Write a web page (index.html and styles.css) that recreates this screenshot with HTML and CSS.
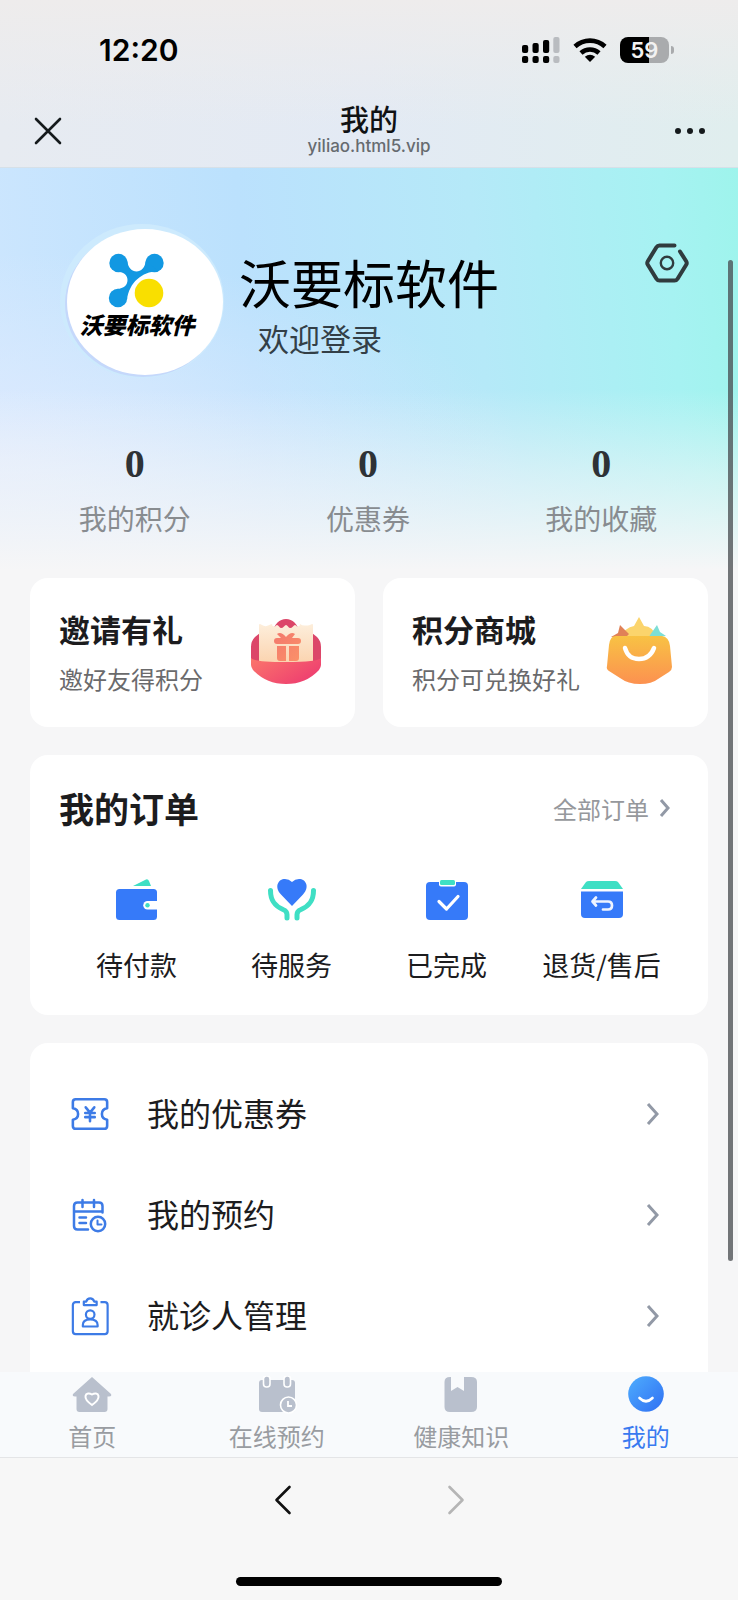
FILE: index.html
```html
<!DOCTYPE html>
<html lang="zh-CN">
<head>
<meta charset="utf-8">
<meta name="viewport" content="width=device-width, initial-scale=1">
<title>我的</title>
<link rel="stylesheet" href="styles.css">
</head>
<body>
<div class="app">
  <header class="topbar">
    <div class="status">
      <time class="clock">12:20</time>
      <div class="status-icons">
        <svg class="signal" width="38" height="26" viewBox="0 0 38 26" aria-hidden="true">
          <g fill="#000"><rect x="0" y="8" width="6.200" height="8" rx="2"/><rect x="10.500" y="6" width="6.200" height="10" rx="2"/><rect x="21" y="3" width="6.200" height="13" rx="2"/><rect x="0" y="19" width="6.200" height="7" rx="2"/><rect x="10.500" y="19" width="6.200" height="7" rx="2"/><rect x="21" y="19" width="6.200" height="7" rx="2"/></g>
          <g fill="#b9bcc0"><rect x="31.300" y="0" width="6.200" height="16" rx="2"/><rect x="31.300" y="19" width="6.200" height="7" rx="2"/></g>
        </svg>
        <svg class="wifi" width="34" height="26" viewBox="0 0 34 26" aria-hidden="true">
          <g fill="none" stroke="#000" stroke-width="4.600"><path d="M2 9.500A22 22 0 0 1 32 9.500"/><path d="M8 16A13.500 13.500 0 0 1 26 16"/></g>
          <path d="M17 25L11.800 19.800Q17 15.600 22.200 19.800Z" fill="#000"/>
        </svg>
        <div class="battery"><span class="battery-level">59</span></div>
      </div>
    </div>
    <div class="navbar">
      <button class="icon-button" type="button" aria-label="关闭">
        <svg width="28" height="28" viewBox="0 0 28 28"><path d="M2 2L26 26M26 2L2 26" stroke="#151a1c" stroke-width="2.600" stroke-linecap="round"/></svg>
      </button>
      <div class="page-title">
        <h1>我的</h1>
        <p>yiliao.html5.vip</p>
      </div>
      <button class="icon-button" type="button" aria-label="更多">
        <svg width="32" height="8" viewBox="0 0 32 8" fill="#151a1c"><circle cx="4" cy="4" r="3"/><circle cx="16" cy="4" r="3"/><circle cx="28" cy="4" r="3"/></svg>
      </button>
    </div>
  </header>

  <div class="scroller">
    <section class="hero">
      <div class="profile">
        <div class="avatar">
          <svg width="156" height="146" viewBox="0 0 156 146" role="img" aria-label="沃要标软件">
            <g fill="#1298e2">
              <circle cx="51.500" cy="34" r="9.200"/><circle cx="87.500" cy="34" r="9.200"/><circle cx="51" cy="69" r="9.200"/>
              <path d="M60 31C61 39 65 42.500 69.500 42.500S78 39 79 31L91 42.500C76 42 62 53 60 71L50 60C57 59.500 60.500 56 60.500 51S57 43 49 42.500Z"/>
            </g>
            <circle cx="82" cy="64" r="14.300" fill="#f9df00"/>
            <text class="logo-text" x="70" y="105" text-anchor="middle">沃要标软件</text>
          </svg>
        </div>
        <div class="identity">
          <h2>沃要标软件</h2>
          <p>欢迎登录</p>
        </div>
        <button class="settings" type="button" aria-label="设置">
          <svg width="46" height="46" viewBox="0 0 46 46" fill="none" stroke="#303b3e" stroke-linecap="round" stroke-linejoin="round">
            <path d="M30.500 5.500H15.500Q13.500 5.500 12.400 7.300L3.800 21.200Q2.700 23 3.800 24.800L12.400 38.700Q13.500 40.500 15.500 40.500H30.500Q32.500 40.500 33.600 38.700L42.200 24.800Q43.300 23 42.200 21.200L36 11.500" stroke-width="4"/>
            <circle cx="23" cy="23" r="6.200" stroke-width="2.400"/>
          </svg>
        </button>
      </div>
      <ul class="stats">
        <li><strong>0</strong><span>我的积分</span></li>
        <li><strong>0</strong><span>优惠券</span></li>
        <li><strong>0</strong><span>我的收藏</span></li>
      </ul>
    </section>

    <main class="content">
      <div class="promos">
        <a class="card promo" href="#invite">
          <div><h3>邀请有礼</h3><p>邀好友得积分</p></div>
          <svg width="72" height="68" viewBox="0 0 72 68" aria-hidden="true">
            <defs>
              <linearGradient id="bowl" x1="0" y1="0" x2="1" y2="0.600"><stop offset="0" stop-color="#fb766b"/><stop offset="1" stop-color="#ee3f70"/></linearGradient>
              <linearGradient id="ticket" x1="0" y1="0" x2="0" y2="1"><stop offset="0" stop-color="#fdeedb"/><stop offset="1" stop-color="#fbd2ad"/></linearGradient>
              <linearGradient id="present" x1="0" y1="0" x2="1" y2="1"><stop offset="0" stop-color="#f3786d"/><stop offset="1" stop-color="#fb9268"/></linearGradient>
            </defs>
            <path d="M1 44V30Q1 24 5 20L10 16H22Q26 2 36 2T50 16H62L67 20Q71 24 71 30V44Z" fill="#dc4669"/>
            <path d="M9 8Q9 6 12 8T18 8.500T22 7Q22 10 25 9.500Q27 6.500 29 9.500T34 9.500Q36 6.500 38 9.500T43 9.500Q45 6.500 47 9.500Q50 10 50 7Q52 8.500 55 8.500T60 8Q63 6 63 8V48H9Z" fill="url(#ticket)"/>
            <path d="M1 41Q4 45 36 45T71 41V48Q71 50 69 53Q56 67 36 67T3 53Q1 50 1 48Z" fill="url(#bowl)"/>
            <path d="M31 21L27 17Q31 14 36 20Q41 14 45 17L42 21H48Q51 21 51 24T48 27H27Q24 27 24 24T27 21ZM27 29H36V44H30Q27 44 27 41ZM39 29H49V41Q49 44 46 44H39Z" fill="url(#present)"/>
          </svg>
        </a>
        <a class="card promo" href="#mall">
          <div><h3>积分商城</h3><p>积分可兑换好礼</p></div>
          <svg width="72" height="68" viewBox="0 0 72 68" aria-hidden="true">
            <defs>
              <linearGradient id="bag" x1="0" y1="0" x2="0" y2="1"><stop offset="0" stop-color="#f8c244"/><stop offset="1" stop-color="#fc9150"/></linearGradient>
            </defs>
            <path d="M36 0L41 9Q50 9 54 21H18Q22 10 31 9Z" fill="#fbd46c"/>
            <path d="M17 8L26 17 21 22 8 20 15 16Z" fill="#e08157"/>
            <path d="M54 8L57 15 63 19 45 21Z" fill="#7ddfd6"/>
            <path d="M13 19H59Q66 20 67 29L69 50Q69 53 66 55L55 62Q49 67 37 67T17 61L6 54Q3 52 4 49L6 28Q7 19 13 19Z" fill="url(#bag)"/>
            <path d="M22 31Q25 42 36 42T51 31" fill="none" stroke="#fff" stroke-width="4.500" stroke-linecap="round"/>
          </svg>
        </a>
      </div>

      <section class="card orders">
        <div class="orders-head">
          <h2>我的订单</h2>
          <a href="#orders">全部订单<svg width="12" height="20" viewBox="0 0 12 20" aria-hidden="true"><path d="M2 2L9 10L2 18" fill="none" stroke="#9299a6" stroke-width="3"/></svg></a>
        </div>
        <nav class="order-grid" aria-label="订单状态">
          <a href="#pay">
            <svg width="50" height="44" viewBox="0 0 50 44" aria-hidden="true">
              <path d="M21 8L34 1.500Q36 .8 37 3L39 8Z" fill="#3fdfc4"/>
              <rect x="4" y="11" width="41" height="31" rx="3.500" fill="#367af9"/>
              <path d="M46 23H35.500A4.200 4.200 0 0 0 35.500 31.500H46Z" fill="#fff"/><circle cx="35.500" cy="27.200" r="2.200" fill="#3fdfc4"/>
            </svg>待付款</a>
          <a href="#service">
            <svg width="50" height="44" viewBox="0 0 50 44" aria-hidden="true">
              <path d="M25 28L14 16.500C7 9 11 1 18 1Q22 1 25 4Q28 1 32 1C39 1 43 9 36 16.500Z" fill="#367af9"/>
              <path d="M3.500 12.500C3.500 23 8 28 16 31.500Q20 33 20 36.500V40M46.500 12.500C46.500 23 42 28 34 31.500Q30 33 30 36.500V40" fill="none" stroke="#3fdfc4" stroke-width="5" stroke-linecap="round"/>
            </svg>待服务</a>
          <a href="#done">
            <svg width="50" height="44" viewBox="0 0 50 44" aria-hidden="true">
              <rect x="4" y="4" width="42" height="38" rx="4" fill="#367af9"/>
              <rect x="17" y="1" width="17" height="7.500" rx="2" fill="#fff"/><rect x="18" y="2" width="15" height="5" rx="1.500" fill="#3fdfc4"/>
              <path d="M17 23.500L24.500 31L36 18.500" fill="none" stroke="#fff" stroke-width="3.200" stroke-linecap="round" stroke-linejoin="round"/>
            </svg>已完成</a>
          <a href="#refund">
            <svg width="50" height="44" viewBox="0 0 50 44" aria-hidden="true">
              <path d="M4 11L9 4Q10 3 12 3H38Q40 3 41 4L46 11Z" fill="#3fdfc4"/>
              <path d="M4 13.500H46V36Q46 40 42 40H8Q4 40 4 36Z" fill="#367af9"/>
              <path d="M19 19.500L15.500 23.500L19 27.500M16 23.500H31Q35 23.500 35 27.500T31 31.500H26" fill="none" stroke="#eef4ff" stroke-width="2.700" stroke-linecap="round" stroke-linejoin="round"/>
            </svg>退货/售后</a>
        </nav>
      </section>

      <nav class="card menu" aria-label="我的服务">
        <a href="#coupons">
          <svg width="40" height="40" viewBox="-1 -1 42 42" fill="none" stroke="#3d7be6" stroke-width="2.700" stroke-linecap="round" stroke-linejoin="round" aria-hidden="true">
            <path d="M5 4.500H35Q38 4.500 38 7.500V14Q32.500 15 32.500 20T38 26V32.500Q38 35.500 35 35.500H5Q2 35.500 2 32.500V26Q7.500 25 7.500 20T2 14V7.500Q2 4.500 5 4.500Z"/>
            <path d="M15.500 13L20 18.500L24.500 13M20 18.500V27.500M15 19H25M15 23.300H25"/>
          </svg>
          <span>我的优惠券</span>
          <svg class="arrow" width="14" height="24" viewBox="0 0 14 24" aria-hidden="true"><path d="M3 2L12 12L3 22" fill="none" stroke="#9299a6" stroke-width="3"/></svg>
        </a>
        <a href="#bookings">
          <svg width="40" height="40" viewBox="0 0 40 40" fill="none" stroke="#3d7be6" stroke-width="2.500" stroke-linecap="round" stroke-linejoin="round" aria-hidden="true">
            <path d="M18 34.500H7.500Q4 34.500 4 31V11Q4 7.500 7.500 7.500H29Q32.500 7.500 32.500 11V17.500M4 16.500H32.500M12.500 5V12M24 5V12M9.500 22.500H16M9.500 28H16"/>
            <circle cx="28" cy="29" r="7.200"/><path d="M27.500 25.500V29.500H31.500" stroke-width="2"/>
          </svg>
          <span>我的预约</span>
          <svg class="arrow" width="14" height="24" viewBox="0 0 14 24" aria-hidden="true"><path d="M3 2L12 12L3 22" fill="none" stroke="#9299a6" stroke-width="3"/></svg>
        </a>
        <a href="#patients">
          <svg width="40" height="40" viewBox="-1 -1 42 42" fill="none" stroke="#3d7be6" stroke-width="2.300" stroke-linejoin="round" aria-hidden="true">
            <path d="M9.500 5.500H5Q2 5.500 2 8.500V36Q2 39 5 39H35.500Q38.500 39 38.500 36V8.500Q38.500 5.500 35.500 5.500H31"/>
            <path d="M13.500 8.500V5H16Q17 1.500 20.200 1.500T24.500 5H27V8.500Z"/>
            <circle cx="20.200" cy="18.500" r="4.500"/><path d="M12.500 31V29.500Q12.500 23.500 20.200 23.500T28 29.500V31Z"/>
          </svg>
          <span>就诊人管理</span>
          <svg class="arrow" width="14" height="24" viewBox="0 0 14 24" aria-hidden="true"><path d="M3 2L12 12L3 22" fill="none" stroke="#9299a6" stroke-width="3"/></svg>
        </a>
      </nav>
    </main>
  </div>

  <nav class="tabs" aria-label="主导航">
    <a href="#home">
      <svg width="40" height="38" viewBox="0 0 40 38" aria-hidden="true">
        <path d="M20 1L39 18Q40 20.500 37 20.500H35.500V33Q35.500 36 32.500 36H7.500Q4.500 36 4.500 33V20.500H3Q0 20.500 1 18Z" fill="#b9c0cd"/>
        <path d="M20 29C15 25.500 13 23 13.500 20S17.500 17 20 18.500C22.500 17 26 17 26.500 20S25 25.500 20 29Z" fill="none" stroke="#fff" stroke-width="2"/>
      </svg>首页</a>
    <a href="#booking">
      <svg width="40" height="38" viewBox="0 0 40 38" aria-hidden="true">
        <rect x="2" y="4" width="36" height="32" rx="3" fill="#b9c0cd"/>
        <g fill="#b9c0cd" stroke="#fff" stroke-width="1.600"><rect x="6.500" y="0" width="6.500" height="11" rx="3"/><rect x="27" y="0" width="6.500" height="11" rx="3"/><circle cx="31.500" cy="29" r="8"/></g>
        <path d="M31 25V30H35" fill="none" stroke="#fff" stroke-width="1.800"/>
      </svg>在线预约</a>
    <a href="#knowledge">
      <svg width="40" height="38" viewBox="0 0 40 38" aria-hidden="true">
        <path d="M9 1H10V15L16.500 11L23 15V1H30Q36 1 36 6V31Q36 36 30 36H9Q3.500 36 3.500 31V6Q3.500 1 9 1Z" fill="#b9c0cd"/>
      </svg>健康知识</a>
    <a class="active" href="#me" aria-current="page">
      <svg width="40" height="38" viewBox="0 0 40 38" aria-hidden="true">
        <defs><linearGradient id="face" x1="0" y1="0" x2="1" y2="1"><stop offset="0.150" stop-color="#4aa4fc"/><stop offset="1" stop-color="#2f6ff3"/></linearGradient></defs>
        <circle cx="20" cy="18" r="17.800" fill="url(#face)"/>
        <path d="M13.500 22Q20 28.500 26.500 22" fill="none" stroke="#fff" stroke-width="2.600" stroke-linecap="round"/>
      </svg>我的</a>
  </nav>

  <footer class="browser-bar">
    <div class="history">
      <button type="button" aria-label="后退"><svg width="18" height="30" viewBox="0 0 18 30"><path d="M15.500 2L2.500 15L15.500 28" fill="none" stroke="#111" stroke-width="2.600" stroke-linecap="round" stroke-linejoin="round"/></svg></button>
      <button type="button" aria-label="前进" disabled><svg width="18" height="30" viewBox="0 0 18 30"><path d="M2.500 2L15.500 15L2.500 28" fill="none" stroke="#b5b5b5" stroke-width="2.600" stroke-linecap="round" stroke-linejoin="round"/></svg></button>
    </div>
    <div class="home-indicator"></div>
  </footer>
  <div class="scroll-thumb"></div>
</div>
</body>
</html>
```
FILE: styles.css
```css
* { box-sizing: border-box; }

body {
  margin: 0;
  background: #f6f6f7;
  color: #1c1c1e;
  font-family: "Noto Sans CJK SC", "Noto Sans", sans-serif;
}

h1, h2, h3, p, ul { margin: 0; padding: 0; }
a { color: inherit; text-decoration: none; }
svg { display: block; flex: none; }
button { border: 0; padding: 0; background: none; }

.app {
  position: relative;
  display: flex;
  flex-direction: column;
  height: 100vh;
}

/* Status bar and title bar */
.topbar {
  flex: none;
  border-bottom: 1px solid #d6e0e8;
  background:
    linear-gradient(180deg, #eeecec 0%, rgba(238, 236, 236, 0) 75%),
    linear-gradient(90deg, #e7ebf1 0%, #e3eaf4 50%, #e0eeee 100%);
}

.status {
  display: flex;
  align-items: center;
  justify-content: space-between;
  height: 100px;
  padding: 0 69px 0 99px;
}

.clock {
  color: #000;
  font: 600 30px/40px Inter, sans-serif;
}

.status-icons { display: flex; align-items: center; gap: 13px; }

.battery {
  position: relative;
  width: 49px;
  height: 26px;
  border-radius: 8px;
  background: linear-gradient(90deg, #000 59%, #a9abad 59%);
}

.battery::after {
  content: "";
  position: absolute;
  top: 9px;
  right: -5px;
  width: 3px;
  height: 8px;
  border-radius: 0 4px 4px 0;
  background: #a9abad;
}

.battery-level {
  display: block;
  color: #f2f2f2;
  font: 600 22px/26px Inter, sans-serif;
  text-align: center;
}

.navbar {
  display: grid;
  grid-template-columns: 40px 1fr 40px;
  align-items: center;
  height: 67px;
  padding: 0 28px;
}

.icon-button { display: grid; place-items: center; height: 40px; }
.navbar .icon-button { margin-bottom: 7px; }

.page-title { text-align: center; }
.page-title h1 { color: #101214; font-size: 29px; font-weight: 500; line-height: 36px; }
.page-title p { padding-bottom: 12px; color: #666b70; font: 500 17px/20px Inter, sans-serif; }

/* Scrolling page */
.scroller {
  flex: 1;
  min-height: 0;
  overflow: hidden;
}

.hero {
  padding: 61px 0 32px;
  background:
    linear-gradient(180deg, rgba(246, 246, 247, 0) 55%, rgba(246, 246, 247, 0.5) 76%, #f6f6f7 100%),
    radial-gradient(ellipse at 0% 72%, rgba(224, 235, 254, 0.9) 0%, rgba(224, 235, 254, 0) 50%),
    linear-gradient(85deg, #cde6fe 0%, #bbe1fd 35%, #b5e9f8 65%, #a6f2f2 90%, #9ef4ec 100%);
}

.profile {
  display: flex;
  align-items: center;
  padding: 0 48px 0 67px;
}

.avatar {
  flex: none;
  overflow: hidden;
  border-radius: 50%;
  background: #fff;
  box-shadow: -2px 2px 0 0 #c5d8fb, -3px -1px 0 4px #cdeafd;
}

.logo-text {
  fill: #000;
  font-size: 23px;
  font-style: italic;
  font-weight: 900;
}

.identity { flex: 1; padding: 12px 0 0 16px; }
.identity h2 { color: #000; font-size: 52px; font-weight: 400; line-height: 60px; }
.identity p { padding-left: 19px; color: #333f47; font-size: 31px; line-height: 52px; }

.settings { align-self: flex-start; margin-top: 11px; }

.stats {
  display: grid;
  grid-template-columns: repeat(3, 1fr);
  padding: 65px 20px 0 18px;
  list-style: none;
  text-align: center;
}

.stats li { display: grid; gap: 10px; }
.stats strong { color: #2e3236; font: 700 40px/48px "Liberation Serif", serif; }
.stats span { color: #888c90; font-size: 28px; line-height: 40px; }

.content {
  display: grid;
  gap: 28px;
  padding: 8px 30px 0;
}

.card { border-radius: 18px; background: #fff; }

.promos { display: grid; grid-template-columns: 1fr 1fr; gap: 28px; }

.promo {
  display: flex;
  align-items: center;
  justify-content: space-between;
  height: 149px;
  padding: 0 33px 4px 29px;
}

.promo h3 { font-size: 31px; font-weight: 700; line-height: 48px; }
.promo p { padding-top: 8px; color: #6a6a6c; font-size: 24px; line-height: 36px; white-space: nowrap; }

.orders { padding: 29px 29px 30px; }

.orders-head {
  display: flex;
  align-items: center;
  justify-content: space-between;
  padding-right: 8px;
}

.orders-head h2 { font-size: 35px; font-weight: 700; line-height: 48px; }
.orders-head a { display: flex; align-items: center; gap: 10px; color: #96989c; font-size: 24px; }

.order-grid { display: grid; grid-template-columns: repeat(4, 1fr); padding-top: 46px; }

.order-grid a {
  display: grid;
  justify-items: center;
  gap: 23px;
  font-size: 27px;
  line-height: 40px;
  white-space: nowrap;
}

.menu { padding: 20px 49px 30px 40px; }

.menu a {
  display: flex;
  align-items: center;
  height: 101px;
  font-size: 32px;
}

.menu span { flex: 1; padding: 0 0 4px 37px; }

/* Tab bar */
.tabs {
  flex: none;
  display: grid;
  grid-template-columns: repeat(4, 1fr);
  height: 86px;
  padding-top: 4px;
  border-bottom: 1px solid #e4e5e7;
  background: #f8fafc;
  color: #999ca1;
  font-size: 24px;
  line-height: 36px;
}

.tabs a { display: grid; justify-items: center; align-content: start; gap: 4px; }
.tabs .active { color: #397af0; }

/* Browser controls */
.browser-bar {
  flex: none;
  display: flex;
  flex-direction: column;
  align-items: center;
  justify-content: space-between;
  height: 142px;
  padding: 27px 0 14px;
  background: #f7f7f7;
}

.history { display: flex; gap: 155px; }

.home-indicator { width: 36%; height: 9px; border-radius: 5px; background: #000; }

.scroll-thumb {
  position: absolute;
  top: 260px;
  right: 5px;
  width: 5px;
  height: 1001px;
  border-radius: 3px;
  background: rgba(70, 74, 78, 0.75);
}
```
